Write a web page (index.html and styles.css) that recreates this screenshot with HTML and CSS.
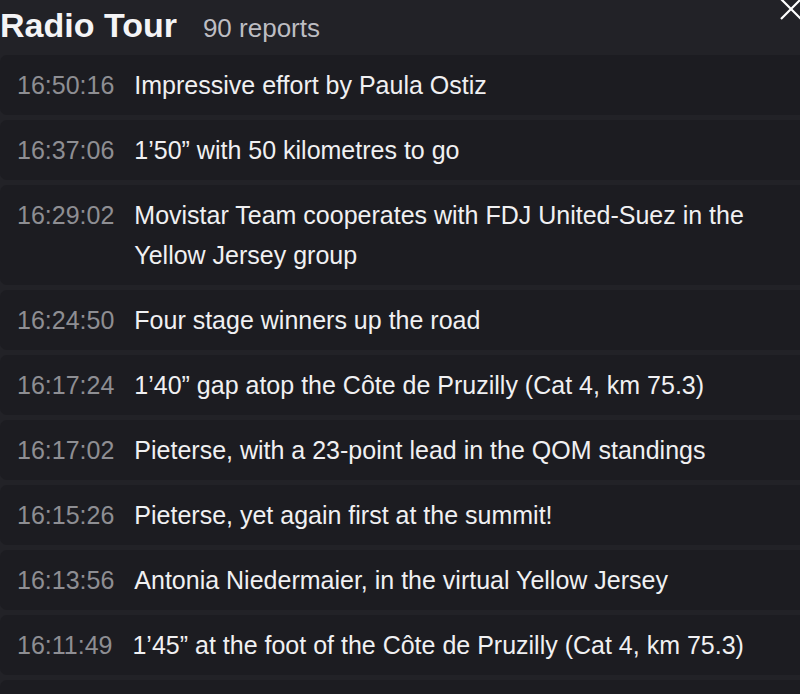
FILE: index.html
```html
<!DOCTYPE html>
<html lang="en">
<head>
  <meta charset="UTF-8">
  <meta name="viewport" content="width=device-width, initial-scale=1.0">
  <title>Radio Tour</title>
  <link rel="stylesheet" href="styles.css">
</head>
<body>
  <div class="panel">
    <!-- header -->
    <div class="header">
      <h1 class="title">Radio Tour</h1>
      <span class="count">90 reports</span>
    </div>
    <button class="close" aria-label="Close">
      <svg width="24" height="24" viewBox="0 0 24 24">
        <path d="M2 -1 L22 19 M22 -1 L2 19" stroke="#ffffff" stroke-width="2.2" fill="none"/>
      </svg>
    </button>

    <!-- reports -->
    <ul class="reports">
      <li class="report"><span class="time">16:50:16</span><span class="msg">Impressive effort by Paula Ostiz</span></li>
      <li class="report"><span class="time">16:37:06</span><span class="msg">1’50” with 50 kilometres to go</span></li>
      <li class="report"><span class="time">16:29:02</span><span class="msg">Movistar Team cooperates with FDJ United-Suez in the Yellow Jersey group</span></li>
      <li class="report"><span class="time">16:24:50</span><span class="msg">Four stage winners up the road</span></li>
      <li class="report"><span class="time">16:17:24</span><span class="msg">1’40” gap atop the Côte de Pruzilly (Cat 4, km 75.3)</span></li>
      <li class="report"><span class="time">16:17:02</span><span class="msg">Pieterse, with a 23-point lead in the QOM standings</span></li>
      <li class="report"><span class="time">16:15:26</span><span class="msg">Pieterse, yet again first at the summit!</span></li>
      <li class="report"><span class="time">16:13:56</span><span class="msg">Antonia Niedermaier, in the virtual Yellow Jersey</span></li>
      <li class="report"><span class="time">16:11:49</span><span class="msg">1’45” at the foot of the Côte de Pruzilly (Cat 4, km 75.3)</span></li>
      <li class="report report-empty"></li>
    </ul>
  </div>
</body>
</html>
```

FILE: styles.css
```css
/* page */
body {
  margin: 0;
  background-color: #222227;
  font-family: "Liberation Sans", Arial, sans-serif;
  color: #f0f0f2;
  overflow: hidden;
}

.panel {
  position: relative;
  height: 694px;
}

/* header */
.header {
  display: flex;
  align-items: baseline;
  padding: 5px 0 10px 0;
  height: 40px;
}

.title {
  margin: 0;
  font-size: 34px;
  line-height: 40px;
  font-weight: bold;
  color: #f4f4f6;
}

.count {
  margin-left: 26px;
  font-size: 26px;
  color: #bdbdc2;
}

.close {
  position: absolute;
  top: 0;
  right: -3px;
  padding: 0;
  border: none;
  background: none;
  cursor: pointer;
}

.close svg {
  display: block;
}

/* report list */
.reports {
  list-style: none;
  margin: 0 -10px 0 0;
  padding: 0;
  display: flex;
  flex-direction: column;
  gap: 5px;
}

.report {
  display: flex;
  gap: 20px;
  padding: 10px 17px;
  background-color: #1c1c21;
  border-radius: 7px;
  font-size: 25px;
  line-height: 40px;
}

.report-empty {
  height: 40px;
}

.time {
  flex-shrink: 0;
  color: #8e8e93;
}

.msg {
  color: #f0f0f2;
  padding-right: 40px;
}
```
